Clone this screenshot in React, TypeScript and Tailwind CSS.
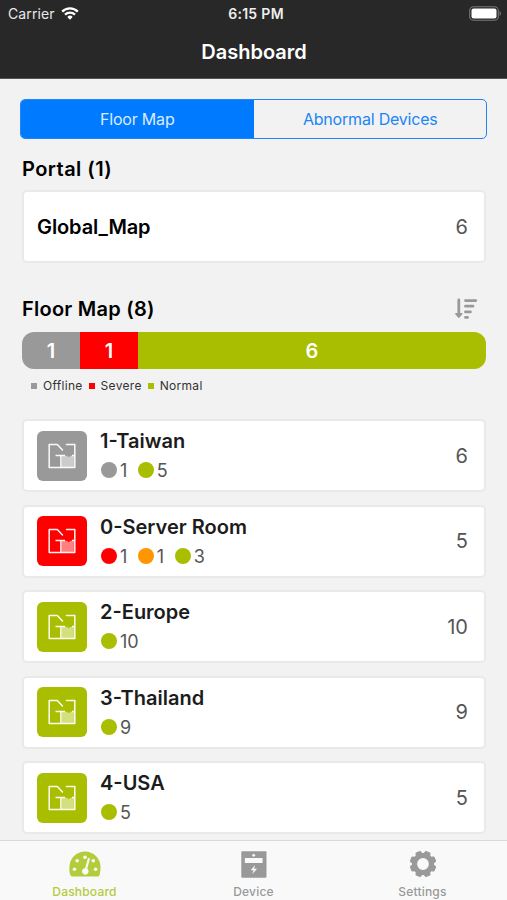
import clsx from "clsx";

type Status = "offline" | "severe" | "warning" | "normal";

const statusColor: Record<Status, string> = {
  offline: "bg-[#999999]",
  severe: "bg-[#ff0000]",
  warning: "bg-[#ff9500]",
  normal: "bg-[#a9be00]",
};

type FloorMap = {
  name: string;
  status: Status;
  total: number;
  counts: { status: Status; value: number }[];
};

const floorMaps: FloorMap[] = [
  {
    name: "1-Taiwan",
    status: "offline",
    total: 6,
    counts: [
      { status: "offline", value: 1 },
      { status: "normal", value: 5 },
    ],
  },
  {
    name: "0-Server Room",
    status: "severe",
    total: 5,
    counts: [
      { status: "severe", value: 1 },
      { status: "warning", value: 1 },
      { status: "normal", value: 3 },
    ],
  },
  { name: "2-Europe", status: "normal", total: 10, counts: [{ status: "normal", value: 10 }] },
  { name: "3-Thailand", status: "normal", total: 9, counts: [{ status: "normal", value: 9 }] },
  { name: "4-USA", status: "normal", total: 5, counts: [{ status: "normal", value: 5 }] },
];

const summary: { label: string; status: Status; value: number }[] = [
  { label: "Offline", status: "offline", value: 1 },
  { label: "Severe", status: "severe", value: 1 },
  { label: "Normal", status: "normal", value: 6 },
];

function WifiIcon() {
  return (
    <svg className="h-[13px] w-[18px]" viewBox="0 0 18 13" fill="none" stroke="white">
      <path d="M1.2 4.6a11 11 0 0 1 15.6 0" strokeWidth="2.3" />
      <path d="M4 7.6a7.1 7.1 0 0 1 10 0" strokeWidth="2.2" />
      <path d="M9 12.7 6.3 9.9a3.9 3.9 0 0 1 5.4 0z" fill="white" stroke="none" />
    </svg>
  );
}

function BatteryIcon() {
  return (
    <svg className="h-[15px] w-[33px]" viewBox="0 0 33 15" fill="none">
      <rect x="0.7" y="0.7" width="28.6" height="13.6" rx="3.8" stroke="#777777" strokeWidth="1.1" />
      <rect x="2.5" y="2.5" width="25" height="10" rx="2" fill="white" />
      <path d="M30.6 5v5c1.8-.8 1.8-4.2 0-5z" fill="#777777" />
    </svg>
  );
}

function SortIcon() {
  return (
    <svg className="h-[22px] w-[24px]" viewBox="0 0 24 22" fill="none" stroke="#999999" strokeLinecap="round">
      <path d="M4.8 2v15" strokeWidth="2.8" />
      <path d="M1.8 15.8h6l-3 3.5z" fill="#999999" strokeWidth="1.4" strokeLinejoin="round" />
      <path d="M11.5 2.6h10.3M11.5 8.2h7.5M11.5 13.9h4.9M11.5 19.4h2" strokeWidth="2.8" />
    </svg>
  );
}

function FloorPlanIcon() {
  return (
    <svg className="h-[26px] w-[28px]" viewBox="0 0 28 26" fill="none" stroke="white" strokeWidth="1.5" strokeOpacity="0.95">
      <path d="M13.6 12.8h5.4l1.5 1.4 2-1.4h3.4v11.4H13.6z" fill="white" fillOpacity="0.5" stroke="none" />
      <path d="M14.5 7 9.3 1.4H1.2v23.2h25.6V1.4h-8.3" strokeLinejoin="round" strokeLinecap="round" />
      <path d="M7.5 12.4H17M12.9 12.4v12.2M24 12.4h2.8" />
    </svg>
  );
}

function GaugeIcon() {
  return (
    <svg className="h-[26px] w-[32px]" viewBox="0 0 32 26">
      <path
        d="M3.3 25.6a2 2 0 0 1-1.7-1A15.3 15.3 0 0 1 .5 16a15.5 15.5 0 0 1 31 0c0 3-.3 5.9-1.1 8.6a2 2 0 0 1-1.7 1z"
        fill="#b2cc3c"
      />
      <g fill="#f9f9f9">
        <circle cx="5.5" cy="18.3" r="1.8" />
        <circle cx="8.2" cy="9.7" r="1.8" />
        <circle cx="16" cy="6.2" r="1.8" />
        <circle cx="24.3" cy="9.7" r="1.8" />
        <circle cx="26.6" cy="18.3" r="1.8" />
        <path d="m19 7 2 .6-2.8 10.1a3.3 3.3 0 1 1-2-.6z" />
      </g>
    </svg>
  );
}

function DeviceIcon() {
  return (
    <svg className="h-[27px] w-[26px]" viewBox="0 0 26 27">
      <rect x="0.3" y="0.3" width="25.2" height="26.4" rx="1" fill="#999999" />
      <rect x="3.8" y="7" width="17.8" height="5" rx="0.6" fill="#f9f9f9" />
      <circle cx="12.7" cy="4.3" r="1.4" fill="#f9f9f9" />
      <path d="m14 14-4.3 5.2h2.8L11.4 23l4.7-5.3h-3z" fill="#f9f9f9" />
    </svg>
  );
}

function GearIcon() {
  return (
    <svg className="h-[28px] w-[28px]" viewBox="0 0 28 28" fill="#999999" stroke="#999999">
      {[22.5, 67.5, 112.5, 157.5, 202.5, 247.5, 292.5, 337.5].map((angle) => (
        <path
          key={angle}
          d="M10.9 4.5 12 1.5h4l1.1 3z"
          strokeWidth="1.6"
          strokeLinejoin="round"
          transform={`rotate(${angle} 14 14)`}
        />
      ))}
      <circle cx="14" cy="14" r="8.4" fill="none" strokeWidth="5" />
    </svg>
  );
}

function FloorMapCard({ map }: { map: FloorMap }) {
  return (
    <div className="flex h-[73px] items-center rounded-[5px] border-2 border-[#e9e9e9] bg-white pl-[13px] pr-4">
      <div className={clsx("flex size-[50px] items-center justify-center rounded-[6px]", statusColor[map.status])}>
        <FloorPlanIcon />
      </div>
      <div className="ml-[13px] flex-1 pt-px">
        <h3 className="text-[20px] leading-6 font-semibold text-[#1c1c1c]">{map.name}</h3>
        <div className="mt-[6px] ml-px flex gap-[10.5px]">
          {map.counts.map((count) => (
            <div key={count.status} className="flex h-6 items-center gap-[3px]">
              <span className={clsx("-mt-[2px] size-4 rounded-full", statusColor[count.status])} />
              <span className="text-[18px] leading-6 text-[#555555]">{count.value}</span>
            </div>
          ))}
        </div>
      </div>
      <span className="text-[20px] text-[#555555]">{map.total}</span>
    </div>
  );
}

export default function App() {
  return (
    <div className="flex h-[900px] w-[507px] flex-col overflow-hidden bg-[#f2f2f2] font-['Inter',sans-serif] text-black">
      <header className="h-[79px] shrink-0 border-b border-[#555555] bg-[#282828] text-white">
        <div className="grid h-[26px] grid-cols-3 items-center pl-2 pr-[5px]">
          <div className="flex items-center gap-[6px] text-[14px] tracking-[0.1px] text-[#e8e8e8]">
            Carrier
            <WifiIcon />
          </div>
          <span className="pl-[2px] text-center text-[14px] font-semibold tracking-[0.3px] text-[#eeeeee]">6:15 PM</span>
          <div className="flex justify-end">
            <BatteryIcon />
          </div>
        </div>
        <h1 className="pt-[11px] pl-px text-center text-[20px] leading-[30px] font-semibold">Dashboard</h1>
      </header>

      <main className="min-h-0 flex-1 overflow-hidden pl-[22px] pr-[21px] pt-5">
        {/* Segmented control */}
        <div className="-ml-[2px] -mr-px grid h-10 grid-cols-2 overflow-hidden rounded-[5px] border border-[#2085f5] text-[16px] tracking-[-0.2px]">
          <button className="bg-[#007aff] text-[#d9ecff]">Floor Map</button>
          <button className="pl-px text-[#2085f5]">Abnormal Devices</button>
        </div>

        <h2 className="mt-[15px] text-[20px] leading-[30px] font-semibold tracking-[0.45px]">Portal (1)</h2>
        <div className="mt-[6px] flex h-[73px] items-center justify-between rounded-[5px] border-2 border-[#e9e9e9] bg-white pl-[13px] pr-4 text-[20px]">
          <span className="pt-px font-semibold tracking-[-0.1px]">Global_Map</span>
          <span className="pt-px text-[#555555]">6</span>
        </div>

        <div className="mt-[31px] flex items-center justify-between pr-[8px]">
          <h2 className="text-[20px] leading-[30px] font-semibold tracking-[0.25px]">Floor Map (8)</h2>
          <SortIcon />
        </div>

        <div className="mt-2 flex h-[37px] overflow-hidden rounded-[12px] text-[20px] font-semibold text-white">
          {summary.map((item) => (
            <div
              key={item.label}
              className={clsx("flex items-center justify-center", statusColor[item.status])}
              style={{ flex: `${item.value} 1 0` }}
            >
              {item.value}
            </div>
          ))}
        </div>
        <div className="mt-[9px] ml-[9px] flex h-4 text-[12px] tracking-[0.3px] text-[#333333]">
          {summary.map((item) => (
            <div key={item.label} className="mr-[6px] flex items-center gap-[6px]">
              <span className={clsx("size-[6px]", statusColor[item.status])} />
              {item.label}
            </div>
          ))}
        </div>

        <div className="mt-[25px] flex flex-col gap-[12.5px]">
          {floorMaps.map((map) => (
            <FloorMapCard key={map.name} map={map} />
          ))}
        </div>
      </main>

      {/* Tab bar */}
      <nav className="grid h-[60px] shrink-0 grid-cols-3 border-t border-[#d8d8d8] bg-[#f9f9f9] text-[12px] font-medium tracking-[0.2px] text-[#999999]">
        <div className="flex flex-col items-center pt-[9px] text-[#b2cc3c]">
          <div className="flex h-[28px] items-center">
            <GaugeIcon />
          </div>
          <span className="mt-[5px]">Dashboard</span>
        </div>
        <div className="flex flex-col items-center pt-[9px]">
          <div className="flex h-[28px] items-center">
            <DeviceIcon />
          </div>
          <span className="mt-[5px]">Device</span>
        </div>
        <div className="flex flex-col items-center pt-[9px]">
          <div className="flex h-[28px] items-center">
            <GearIcon />
          </div>
          <span className="mt-[5px]">Settings</span>
        </div>
      </nav>
    </div>
  );
}
